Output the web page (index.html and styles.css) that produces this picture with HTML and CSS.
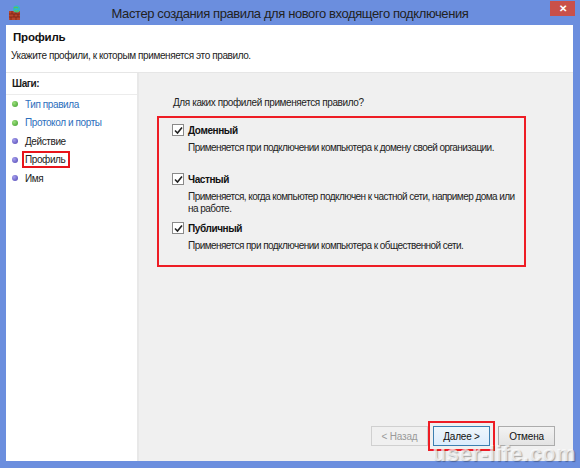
FILE: index.html
```html
<!DOCTYPE html>
<html lang="ru">
<head>
<meta charset="utf-8">
<link rel="stylesheet" href="styles.css">
</head>
<body>
<div class="window">
  <div class="titlebar">
    <svg class="appicon" width="14" height="16" viewBox="0 0 14 16">
      <rect x="1" y="6" width="11" height="9" fill="#b6452c"/>
      <path d="M1 9h11M1 12h11M4 6v3M8 6v3M6 9v3M10 9v3M3 12v3M8 12v3" stroke="#7a2414" stroke-width="0.8"/>
      <circle cx="8.5" cy="4" r="3.5" fill="#2fb8c8"/>
      <path d="M6 3c1-1 3-1 4 0M6.5 5.5c1 .8 3 .8 4 0" stroke="#63c24a" stroke-width="1.2" fill="none"/>
    </svg>
    <div class="title">Мастер создания правила для нового входящего подключения</div>
    <div class="close">✕</div>
  </div>
  <div class="client">
    <div class="header">
      <div class="h-title">Профиль</div>
      <div class="h-sub">Укажите профили, к которым применяется это правило.</div>
    </div>
    <div class="body">
      <div class="steps">
        <div class="steps-head">Шаги:</div>
        <ul class="step-list">
          <li class="step done"><span class="dot green"></span>Тип правила</li>
          <li class="step done"><span class="dot green"></span>Протокол и порты</li>
          <li class="step"><span class="dot blue"></span>Действие</li>
          <li class="step"><span class="dot blue"></span><span class="current">Профиль</span></li>
          <li class="step"><span class="dot blue"></span>Имя</li>
        </ul>
      </div>
      <div class="main">
        <div class="question">Для каких профилей применяется правило?</div>
        <div class="options">
          <div class="opt">
            <div class="opt-head"><span class="cb"><svg width="9" height="9" viewBox="0 0 9 9"><path d="M1 4.5l2.5 2.5L8 1.5" stroke="#222" stroke-width="1.6" fill="none"/></svg></span>Доменный</div>
            <div class="opt-desc">Применяется при подключении компьютера к домену своей организации.</div>
          </div>
          <div class="opt">
            <div class="opt-head"><span class="cb"><svg width="9" height="9" viewBox="0 0 9 9"><path d="M1 4.5l2.5 2.5L8 1.5" stroke="#222" stroke-width="1.6" fill="none"/></svg></span>Частный</div>
            <div class="opt-desc">Применяется, когда компьютер подключен к частной сети, например дома или на работе.</div>
          </div>
          <div class="opt">
            <div class="opt-head"><span class="cb"><svg width="9" height="9" viewBox="0 0 9 9"><path d="M1 4.5l2.5 2.5L8 1.5" stroke="#222" stroke-width="1.6" fill="none"/></svg></span>Публичный</div>
            <div class="opt-desc">Применяется при подключении компьютера к общественной сети.</div>
          </div>
        </div>
        <div class="buttons">
          <button class="btn disabled">&lt; Назад</button>
          <span class="btn-mark"><button class="btn default">Далее &gt;</button></span>
          <button class="btn">Отмена</button>
        </div>
      </div>
    </div>
  </div>
  <div class="watermark">user-life.com</div>
</div>
</body>
</html>
```

FILE: styles.css
```css
* { box-sizing: border-box; }
html, body { margin: 0; padding: 0; }
body {
  width: 580px;
  height: 468px;
  background: #6b8ede;
  font-family: "Liberation Sans", Arial, sans-serif;
  font-size: 10px;
  letter-spacing: -0.4px;
  color: #1a1a1a;
  overflow: hidden;
}
.window { position: relative; width: 580px; height: 468px; }
.titlebar {
  height: 25px;
  display: flex;
  align-items: center;
  position: relative;
}
.appicon { position: absolute; left: 8px; top: 5px; }
.title {
  flex: 1;
  text-align: center;
  font-size: 13px;
  letter-spacing: -0.4px;
  color: #222;
  padding-top: 1px;
}
.close {
  position: absolute;
  right: 5px;
  top: 1px;
  width: 25px;
  height: 15px;
  background: #c9504a;
  color: #fff;
  font-size: 10px;
  font-weight: bold;
  letter-spacing: 0;
  display: flex;
  align-items: center;
  justify-content: center;
}
.client {
  margin: 0 7px 0 6px;
  height: 436px;
  display: flex;
  flex-direction: column;
  background: #fff;
}
.header {
  height: 48px;
  padding: 6px 0 0 7px;
  border-bottom: 1px solid #e6e6e6;
}
.h-title { font-weight: bold; font-size: 11.5px; color: #111; letter-spacing: -0.2px; }
.h-sub { margin-top: 7px; margin-left: -2px; color: #222; }
.body { flex: 1; display: flex; }
.steps {
  width: 133px;
  background: #fff;
  border-right: 2px solid #e8e8e8;
}
.steps-head {
  height: 22px;
  padding: 5px 0 0 6px;
  font-weight: bold;
  border-bottom: 1px solid #ececec;
}
.step-list { list-style: none; margin: 0; padding: 0 0 0 6px; }
.step {
  height: 18.5px;
  display: flex;
  align-items: center;
  color: #222;
}
.step.done { color: #2d6fbd; }
.dot {
  width: 6px;
  height: 6px;
  border-radius: 50%;
  margin-right: 7px;
  flex: none;
}
.dot.green { background: radial-gradient(circle at 35% 35%, #9be07c, #3d9a2a); }
.dot.blue { background: radial-gradient(circle at 35% 35%, #a7a0ee, #4d43b2); }
.current {
  border: 2px solid #e8141b;
  padding: 1px 3px 1px 1px;
  margin-left: -3px;
}
.main {
  flex: 1;
  background: #f0f0f0;
  display: flex;
  flex-direction: column;
  padding: 24px 0 0 18px;
}
.question { color: #222; padding-left: 16px; }
.options {
  margin-top: 8px;
  width: 369px;
  height: 151px;
  border: 2px solid #ee1c24;
  padding: 5px 0 0 13px;
}
.opt { margin-bottom: 6px; }
.opt-head {
  display: flex;
  align-items: center;
  font-weight: bold;
  color: #111;
  height: 14px;
}
.cb {
  width: 12px;
  height: 12px;
  border: 1px solid #8a8a8a;
  background: #fff;
  margin-right: 4px;
  display: flex;
  align-items: center;
  justify-content: center;
}
.opt-desc {
  margin-top: 5px;
  padding-left: 16px;
  color: #222;
  line-height: 12px;
  letter-spacing: -0.55px;
  min-height: 24px;
  width: 345px;
}
.buttons {
  margin-top: auto;
  margin-bottom: 10px;
  display: flex;
  align-items: center;
  padding-left: 214px;
}
.btn {
  width: 57px;
  height: 20px;
  font-family: inherit;
  font-size: 10px;
  letter-spacing: -0.2px;
  background: linear-gradient(#f3f3f3, #e3e3e3);
  border: 1px solid #acacac;
  color: #111;
  padding: 0;
}
.btn.disabled { color: #9a9a9a; border-color: #d0d0d0; background: #f0f0f0; }
.btn.default { border-color: #3c7fb1; background: linear-gradient(#eef6fc, #dcecfc); }
.btn-mark {
  border: 2px solid #ee1c24;
  padding: 3px;
  margin: 0 3px 0 0;
  display: flex;
}
.watermark {
  position: absolute;
  right: 4px;
  bottom: 1px;
  font-size: 22px;
  font-weight: bold;
  color: rgba(255,255,255,0.7);
  text-shadow: 1px 1px 1px rgba(0,0,0,0.3);
  letter-spacing: 0.5px;
}
```
